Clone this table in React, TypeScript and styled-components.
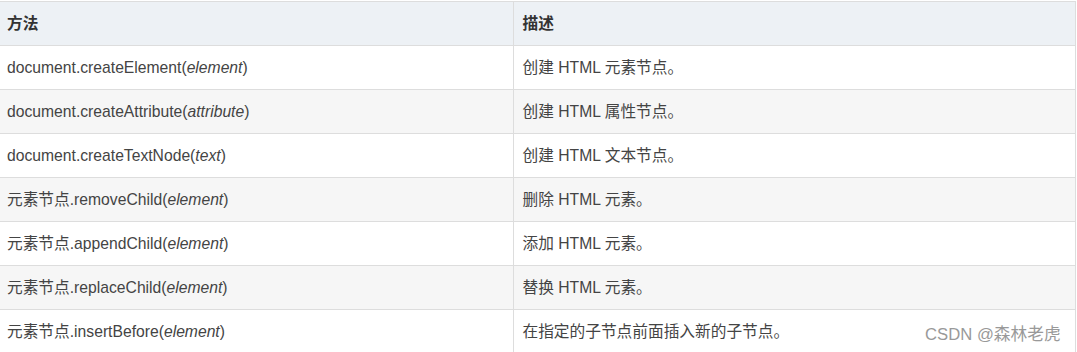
import React from "react";
import styled, { createGlobalStyle } from "styled-components";

const Global = createGlobalStyle`
  html, body { margin: 0; padding: 0; background: #fff; }
  body { font-family: "Liberation Sans", Arial, "Noto Sans CJK SC", sans-serif; }
`;

const Wrap = styled.div`
  position: relative;
  width: 1077px;
  height: 352px;
  overflow: hidden;
`;

const Table = styled.table`
  width: 1076px;
  border-collapse: collapse;
  border-top: 1px solid #dddddd;
  margin-top: 1px;
  font-size: 15.7px;
  color: #444444;
  table-layout: fixed;
`;

const Row = styled.tr<{ $alt?: boolean; $head?: boolean }>`
  background: ${(p) => (p.$head ? "#edf1f5" : p.$alt ? "#f6f6f6" : "#ffffff")};
  border-bottom: 1px solid #dddddd;
`;

const Cell = styled.td<{ $first?: boolean }>`
  height: 44px;
  box-sizing: border-box;
  padding: 0 0 0 ${(p) => (p.$first ? "7px" : "9px")};
  border-right: 1px solid #dddddd;
  line-height: 20px;
  vertical-align: middle;
  width: ${(p) => (p.$first ? "513px" : "auto")};
  white-space: nowrap;
`;

const HeadCell = styled(Cell).attrs({ as: "th" })`
  text-align: left;
  font-weight: bold;
  color: #333333;
`;

const Em = styled.i`
  font-style: italic;
`;

const Watermark = styled.div`
  position: absolute;
  left: 925px;
  top: 321px;
  font-size: 16.7px;
  color: #999999;
  font-family: "Liberation Sans", Arial, "Noto Sans CJK SC", sans-serif;
`;

const rows: { m: React.ReactNode; d: string }[] = [
  { m: <>document.createElement(<Em>element</Em>)</>, d: "创建 HTML 元素节点。" },
  { m: <>document.createAttribute(<Em>attribute</Em>)</>, d: "创建 HTML 属性节点。" },
  { m: <>document.createTextNode(<Em>text</Em>)</>, d: "创建 HTML 文本节点。" },
  { m: <>元素节点.removeChild(<Em>element</Em>)</>, d: "删除 HTML 元素。" },
  { m: <>元素节点.appendChild(<Em>element</Em>)</>, d: "添加 HTML 元素。" },
  { m: <>元素节点.replaceChild(<Em>element</Em>)</>, d: "替换 HTML 元素。" },
  { m: <>元素节点.insertBefore(<Em>element</Em>)</>, d: "在指定的子节点前面插入新的子节点。" },
];

export default function App() {
  return (
    <Wrap>
      <Global />
      <Table>
        <thead>
          <Row $head>
            <HeadCell $first>方法</HeadCell>
            <HeadCell>描述</HeadCell>
          </Row>
        </thead>
        <tbody>
          {rows.map((r, i) => (
            <Row key={i} $alt={i % 2 === 1}>
              <Cell $first>{r.m}</Cell>
              <Cell>{r.d}</Cell>
            </Row>
          ))}
        </tbody>
      </Table>
      <Watermark>CSDN @森林老虎</Watermark>
    </Wrap>
  );
}
